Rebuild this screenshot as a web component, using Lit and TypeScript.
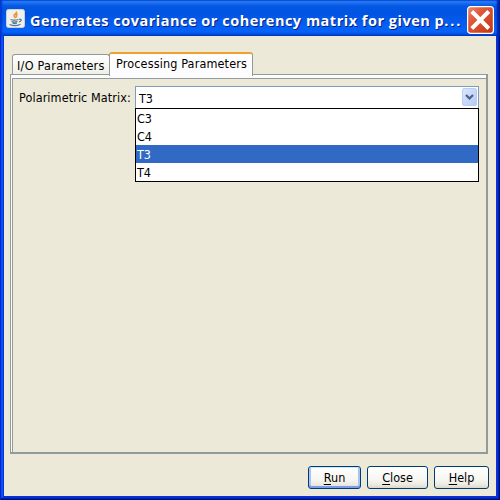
import { LitElement, html, css } from "lit";
import { customElement, state } from "lit/decorators.js";
import { classMap } from "lit/directives/class-map.js";

@customElement("app-root")
export class AppRoot extends LitElement {
  @state() private selected = "T3";
  private options = ["C3", "C4", "T3", "T4"];

  static styles = css`
    :host { display: block; width: 500px; height: 500px; font: 12.5px/18px "DejaVu Sans", sans-serif; font-stretch: condensed; color: #000; }
    * { box-sizing: border-box; }
    .window { width: 500px; height: 500px; padding: 0 4px 4px; display: flex; flex-direction: column; background: #0831d9; box-shadow: inset 1px 0 #0024d0, inset -1px -1px #00108c, inset -2px -2px #001ea0, inset 3px 0 #0a50ee; }
    .bar { height: 36px; margin: 0 -4px; padding: 9px 5px 0 6px; display: flex; flex: none; background: linear-gradient(#0a4fd0 0, #2c86fa 1px, #1a6ff0 3px, #0558e2 6px, #0054e3 14px, #0560f5 27px, #0562f8 32px, #0048d0 35px, #0040c0 36px); box-shadow: inset 2px 0 2px #0038d0, inset -3px 0 2px #0020a8; }
    .logo { width: 19px; height: 19px; flex: none; }
    .title { width: 434px; margin-left: 5px; height: 24px; flex: none; font: bold 14.5px/23px "Open Sans", sans-serif; letter-spacing: 0.5px; color: #fff; white-space: nowrap; text-shadow: 1px 1px #0a2080; }
    .dots { letter-spacing: 1.9px; }
    .close { width: 27px; height: 28px; margin: -3px 0 0 3px; flex: none; }
    .body { flex: 1; background: #ece9d8; padding: 16px 7px 7px 6px; display: flex; flex-direction: column; }
    .tabs { height: 22px; flex: none; display: flex; align-items: flex-end; padding-left: 2px; z-index: 1; }
    .tab { border: 1px solid #919b9c; border-bottom: 0; border-radius: 3px 3px 0 0; white-space: nowrap; }
    .tab.first { width: 98px; height: 20px; padding-left: 4px; line-height: 22px; background: linear-gradient(#fff, #f0efe6); letter-spacing: 0.27px; }
    .tab.active { width: 144px; height: 24px; margin: 0 0 -2px -1px; padding-left: 6px; line-height: 20px; background: linear-gradient(#fff, #fcfcfe); border-top: 2px solid #f0a02c; letter-spacing: 0.15px; }
    .pane { height: 380px; flex: none; margin-right: 1px; border: 1px solid #919b9c; border-right: 2px solid #919b9c; border-bottom: 2px solid #919b9c; background: #fcfcfe; padding: 3px 0 0 1px; }
    .inner { height: 374px; background: #ece9d8; border: 1px solid #919b9c; border-width: 1px 0 0 1px; padding: 7px 7px 0 6px; display: flex; align-items: flex-start; }
    .label { width: 116px; flex: none; line-height: 24px; white-space: nowrap; letter-spacing: 0.1px; }
    .combo { flex: 1; height: 23px; position: relative; display: flex; justify-content: space-between; border: 1px solid #7f9db9; background: #fff; padding: 1px 0 0 3px; line-height: 21px; }
    .arrow { width: 16px; height: 19px; }
    .list { position: absolute; top: 21px; left: -1px; right: -1px; height: 74px; border: 1px solid #000; background: #fff; }
    .option { height: 18px; padding-left: 1px; line-height: 20px; }
    .option.on { background: #316ac5; color: #fff; }
    .actions { margin-top: auto; display: flex; justify-content: flex-end; gap: 6px; flex: none; }
    button { height: 23px; padding: 1px 0 0; border: 1px solid #003c74; border-radius: 3px; font: inherit; line-height: 20px; color: #000; background: linear-gradient(#fff, #f7f6f1 60%, #ece9e0 85%, #dcd6ca); }
    .run { width: 53px; box-shadow: inset 0 1px #cee7ff, inset 0 -2px #7a9cea, inset 2px 0 #a9c4f4, inset -2px 0 #a9c4f4; }
    .shut { width: 61px; }
    .help { width: 55px; }
    u { text-underline-offset: 2px; text-decoration-thickness: 1px; text-decoration-skip-ink: none; }
  `;

  render() {
    return html`
      <div class="window">
        <header class="bar">
          <svg class="logo" viewBox="0 0 19 19">
            <rect x=".5" y=".5" width="18" height="18" rx="2" fill="#f0f0ec" stroke="#c8d0da" />
            <path d="M10.500 2.500c1 2-3.500 3-2.500 4.500l1.500 2.200M11.500 5c-2 1-1.500 2-.8 3.500" fill="none" stroke="#ee9138" stroke-width="1.500" />
            <path d="M4.500 10.500c2 .8 5.500.8 8 0M5.500 12.500c2 .7 4 .7 6 0M6.500 14c1.500.7 3 .7 4.500 0M13 10.300c3-.5 3 1.700 0 2.600M3.500 15.500c3 1.300 8 1.300 11-.3" fill="none" stroke="#587894" stroke-width="1.200" />
          </svg>
          <span class="title">Generates covariance or coherency matrix for given p<span class="dots">...</span></span>
          <svg class="close" viewBox="0 0 27 28">
            <defs><linearGradient id="red" x2="1" y2="1"><stop stop-color="#e88a70" /><stop offset=".35" stop-color="#e0583a" /><stop offset="1" stop-color="#bd350f" /></linearGradient></defs>
            <rect x=".6" y=".6" width="25.800" height="26.800" rx="3" fill="url(#red)" stroke="#fff" stroke-width="1.200" />
            <path d="M4.800 5.500l17 17M21.800 5.500l-17 17" stroke="#fff" stroke-width="4" />
          </svg>
        </header>
        <main class="body">
          <nav class="tabs">
            <div class="tab first">I/O Parameters</div>
            <div class="tab active">Processing Parameters</div>
          </nav>
          <section class="pane">
            <div class="inner">
              <span class="label">Polarimetric Matrix:</span>
              <div class="combo">
                <span>${this.selected}</span>
                <svg class="arrow" viewBox="0 0 16 19">
                  <defs><linearGradient id="blue" x2="1" y2="1"><stop stop-color="#dce7ff" /><stop offset="1" stop-color="#b5c9f6" /></linearGradient></defs>
                  <rect x=".5" y=".5" width="14" height="17" rx="1.500" fill="url(#blue)" stroke="#bccdf4" />
                  <path d="M4 7l3.500 3.500L11 7" fill="none" stroke="#4d6185" stroke-width="2.200" />
                </svg>
                <div class="list">
                  ${this.options.map((o) => html`<div class=${classMap({ option: true, on: o === this.selected })} @click=${() => (this.selected = o)}>${o}</div>`)}
                </div>
              </div>
            </div>
          </section>
          <footer class="actions">
            <button class="run"><u>R</u>un</button>
            <button class="shut"><u>C</u>lose</button>
            <button class="help"><u>H</u>elp</button>
          </footer>
        </main>
      </div>
    `;
  }
}
